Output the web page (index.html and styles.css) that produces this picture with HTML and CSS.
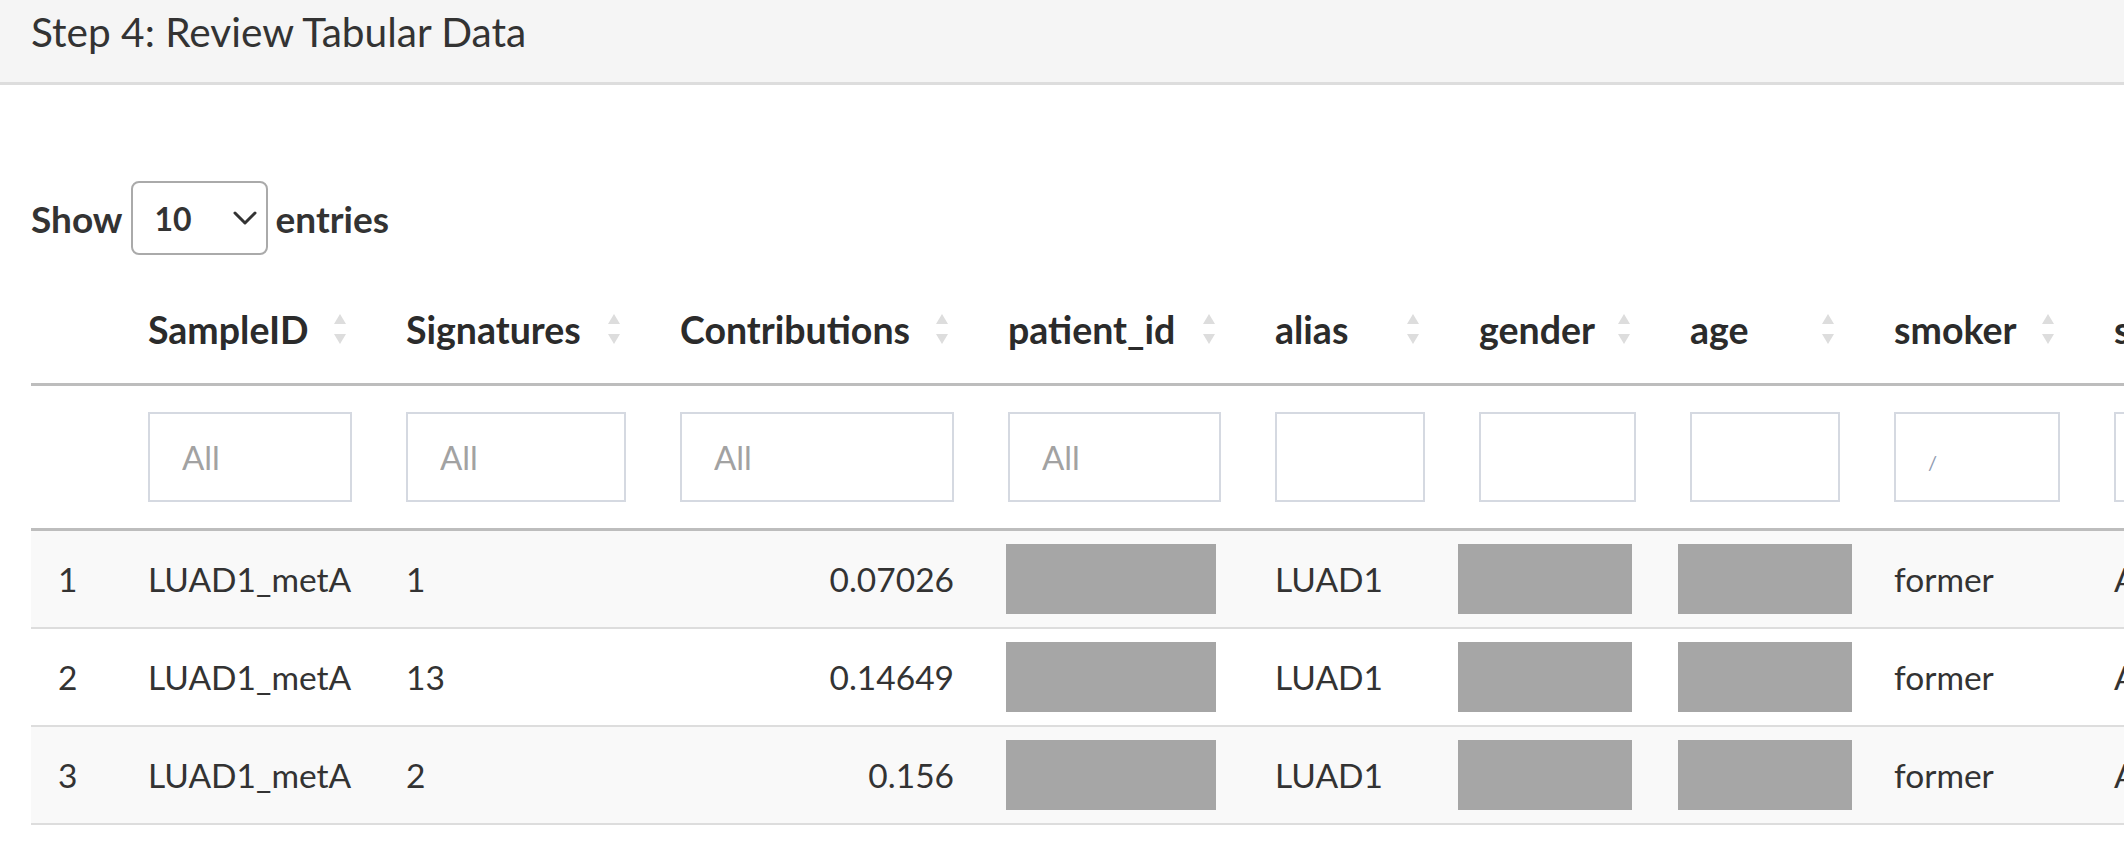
FILE: index.html
```html
<!DOCTYPE html>
<html lang="en">
<head>
<meta charset="utf-8">
<title>Step 4: Review Tabular Data</title>
<link rel="stylesheet" href="styles.css">
</head>
<body>
<div class="card">
  <div class="card-header">Step 4: Review Tabular Data</div>
  <div class="card-body">
    <div class="length">
      <span class="lbl">Show</span>
      <div class="select">
        <span class="sel-val">10</span>
        <svg class="chev" width="24" height="14" viewBox="0 0 24 14"><polyline points="2,2 12,12 22,2" fill="none" stroke="#333" stroke-width="3" stroke-linecap="round" stroke-linejoin="round"/></svg>
      </div>
      <span class="lbl">entries</span>
    </div>
    <table class="dt">
      <colgroup>
        <col class="w-idx"><col class="w-sample"><col class="w-sig"><col class="w-contrib"><col class="w-pid"><col class="w-alias"><col class="w-gender"><col class="w-age"><col class="w-smoker"><col class="w-last">
      </colgroup>
      <thead>
        <tr class="hdr">
          <th><div class="cell"></div></th>
          <th><div class="cell"><span>SampleID</span><svg class="sort" width="12" height="30" viewBox="0 0 12 30"><polygon points="6,0 12,10 0,10"/><polygon points="0,20 12,20 6,30"/></svg></div></th>
          <th><div class="cell"><span>Signatures</span><svg class="sort" width="12" height="30" viewBox="0 0 12 30"><polygon points="6,0 12,10 0,10"/><polygon points="0,20 12,20 6,30"/></svg></div></th>
          <th><div class="cell"><span>Contributions</span><svg class="sort" width="12" height="30" viewBox="0 0 12 30"><polygon points="6,0 12,10 0,10"/><polygon points="0,20 12,20 6,30"/></svg></div></th>
          <th><div class="cell"><span>patient_id</span><svg class="sort" width="12" height="30" viewBox="0 0 12 30"><polygon points="6,0 12,10 0,10"/><polygon points="0,20 12,20 6,30"/></svg></div></th>
          <th><div class="cell"><span>alias</span><svg class="sort" width="12" height="30" viewBox="0 0 12 30"><polygon points="6,0 12,10 0,10"/><polygon points="0,20 12,20 6,30"/></svg></div></th>
          <th><div class="cell"><span>gender</span><svg class="sort" width="12" height="30" viewBox="0 0 12 30"><polygon points="6,0 12,10 0,10"/><polygon points="0,20 12,20 6,30"/></svg></div></th>
          <th><div class="cell"><span>age</span><svg class="sort" width="12" height="30" viewBox="0 0 12 30"><polygon points="6,0 12,10 0,10"/><polygon points="0,20 12,20 6,30"/></svg></div></th>
          <th><div class="cell"><span>smoker</span><svg class="sort" width="12" height="30" viewBox="0 0 12 30"><polygon points="6,0 12,10 0,10"/><polygon points="0,20 12,20 6,30"/></svg></div></th>
          <th><div class="cell"><span>sample_type</span><svg class="sort" width="12" height="30" viewBox="0 0 12 30"><polygon points="6,0 12,10 0,10"/><polygon points="0,20 12,20 6,30"/></svg></div></th>
        </tr>
        <tr class="flt">
          <th><div class="cell"></div></th>
          <th><div class="cell"><input type="search" placeholder="All"></div></th>
          <th><div class="cell"><input type="search" placeholder="All"></div></th>
          <th><div class="cell"><input type="search" placeholder="All"></div></th>
          <th><div class="cell"><input type="search" placeholder="All"></div></th>
          <th><div class="cell"><input type="search"></div></th>
          <th><div class="cell"><input type="search"></div></th>
          <th><div class="cell"><input type="search"></div></th>
          <th><div class="cell"><input type="search" class="slash" placeholder="/"></div></th>
          <th><div class="cell"><input type="search"></div></th>
        </tr>
      </thead>
      <tbody>
        <tr class="odd">
          <td><div class="cell">1</div></td>
          <td><div class="cell">LUAD1_metA</div></td>
          <td><div class="cell">1</div></td>
          <td><div class="cell right">0.07026</div></td>
          <td><div class="cell"><div class="redact r-pid"></div></div></td>
          <td><div class="cell">LUAD1</div></td>
          <td><div class="cell"><div class="redact r-gender"></div></div></td>
          <td><div class="cell"><div class="redact r-age"></div></div></td>
          <td><div class="cell">former</div></td>
          <td><div class="cell">Adenocarcinoma</div></td>
        </tr>
        <tr>
          <td><div class="cell">2</div></td>
          <td><div class="cell">LUAD1_metA</div></td>
          <td><div class="cell">13</div></td>
          <td><div class="cell right">0.14649</div></td>
          <td><div class="cell"><div class="redact r-pid"></div></div></td>
          <td><div class="cell">LUAD1</div></td>
          <td><div class="cell"><div class="redact r-gender"></div></div></td>
          <td><div class="cell"><div class="redact r-age"></div></div></td>
          <td><div class="cell">former</div></td>
          <td><div class="cell">Adenocarcinoma</div></td>
        </tr>
        <tr class="odd">
          <td><div class="cell">3</div></td>
          <td><div class="cell">LUAD1_metA</div></td>
          <td><div class="cell">2</div></td>
          <td><div class="cell right">0.156</div></td>
          <td><div class="cell"><div class="redact r-pid"></div></div></td>
          <td><div class="cell">LUAD1</div></td>
          <td><div class="cell"><div class="redact r-gender"></div></div></td>
          <td><div class="cell"><div class="redact r-age"></div></div></td>
          <td><div class="cell">former</div></td>
          <td><div class="cell">Adenocarcinoma</div></td>
        </tr>
        <tr>
          <td><div class="cell">4</div></td>
          <td><div class="cell">LUAD1_metA</div></td>
          <td><div class="cell">4</div></td>
          <td><div class="cell right">0.2041</div></td>
          <td><div class="cell">P-00101</div></td>
          <td><div class="cell">LUAD1</div></td>
          <td><div class="cell">female</div></td>
          <td><div class="cell">67</div></td>
          <td><div class="cell">former</div></td>
          <td><div class="cell">Adenocarcinoma</div></td>
        </tr>
      </tbody>
    </table>
  </div>
</div>
</body>
</html>
```
FILE: styles.css
```css
* { box-sizing: border-box; }

html, body {
  margin: 0;
  padding: 0;
  background: #ffffff;
}

body {
  font-family: Lato, "Liberation Sans", sans-serif;
  color: #333333;
  width: 2124px;
  height: 861px;
  overflow: hidden;
}

.card-header {
  height: 85px;
  background: #f5f5f5;
  border-bottom: 3px solid #dddddd;
  padding: 7px 0 0 31px;
  font-size: 40.6px;
  line-height: 50px;
  color: #333333;
}

.card-body {
  padding: 96px 0 0 31px;
}

.length {
  display: flex;
  align-items: center;
  height: 74px;
  font-size: 37px;
  font-weight: 700;
}

.select {
  width: 137px;
  height: 74px;
  margin: 0 8px 0 8px;
  padding: 0 9px 0 22px;
  border: 2px solid #aaaaaa;
  border-radius: 8px;
  display: flex;
  align-items: center;
  justify-content: space-between;
}

.sel-val {
  font-size: 32px;
  font-weight: 700;
}

.dt {
  margin-top: 20px;
  border-collapse: separate;
  border-spacing: 0;
  table-layout: fixed;
  width: 2369px;
}

.w-idx { width: 90px; }
.w-sample { width: 258px; }
.w-sig { width: 274px; }
.w-contrib { width: 328px; }
.w-pid { width: 267px; }
.w-alias { width: 204px; }
.w-gender { width: 211px; }
.w-age { width: 204px; }
.w-smoker { width: 220px; }
.w-last { width: 313px; }

.dt th,
.dt td {
  padding: 0 27px;
  text-align: left;
  vertical-align: middle;
}

.cell {
  display: flex;
  align-items: center;
  white-space: nowrap;
}

.hdr th {
  border-bottom: 3px solid #bdbdbd;
}

.hdr .cell {
  height: 108px;
  font-size: 37.5px;
  font-weight: 700;
  color: #2b2b2b;
}

.sort {
  margin-left: auto;
  margin-right: 6px;
  flex: none;
  fill: #dddddd;
}

.flt th {
  border-bottom: 3px solid #bdbdbd;
  font-weight: 400;
}

.flt .cell {
  height: 142px;
}

.flt input {
  width: 100%;
  height: 90px;
  margin: 0;
  border: 2px solid #d5d9e1;
  border-radius: 0;
  padding: 0 0 0 32px;
  font-family: Lato, "Liberation Sans", sans-serif;
  font-size: 33px;
  color: #333333;
  background: #ffffff;
  outline: none;
  -webkit-appearance: none;
  appearance: none;
}

.flt input::placeholder {
  color: #a2a2a2;
}

.flt input.slash::placeholder {
  color: #8f9ab0;
  font-size: 20px;
}

tbody td {
  border-bottom: 2px solid #dddddd;
  font-size: 33.5px;
  color: #333333;
}

tbody .cell {
  height: 96px;
}

tbody tr.odd td {
  background: #f9f9f9;
}

.cell.right {
  justify-content: flex-end;
}

.redact {
  flex: none;
  height: 70px;
  background: #a6a6a6;
}

.r-pid { width: 210px; margin-left: -2px; }
.r-gender { width: 174px; margin-left: -21px; }
.r-age { width: 174px; margin-left: -12px; }
```
